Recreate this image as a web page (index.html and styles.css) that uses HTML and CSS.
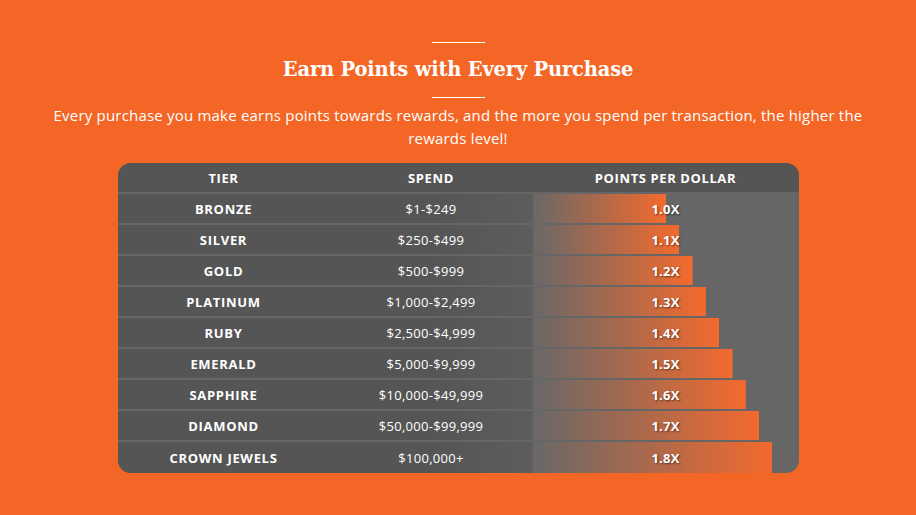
FILE: index.html
```html
<!DOCTYPE html>
<html lang="en">
<head>
<meta charset="utf-8">
<title>Earn Points with Every Purchase</title>
<link rel="stylesheet" href="styles.css">
</head>
<body>
<section class="rewards">
  <span class="rule"></span>
  <h1 class="title">Earn Points with Every Purchase</h1>
  <span class="rule"></span>
  <p class="intro">Every purchase you make earns points towards rewards, and the more you spend per transaction, the higher the rewards level!</p>
  <div class="table">
    <div class="row head">
      <div class="cell">TIER</div>
      <div class="cell">SPEND</div>
      <div class="cell">POINTS PER DOLLAR</div>
    </div>
    <div class="row"><div class="cell tier">BRONZE</div><div class="cell spend">$1-$249</div><div class="cell points" style="--w:50%">1.0X</div></div>
    <div class="row"><div class="cell tier">SILVER</div><div class="cell spend">$250-$499</div><div class="cell points" style="--w:55%">1.1X</div></div>
    <div class="row"><div class="cell tier">GOLD</div><div class="cell spend">$500-$999</div><div class="cell points" style="--w:60%">1.2X</div></div>
    <div class="row"><div class="cell tier">PLATINUM</div><div class="cell spend">$1,000-$2,499</div><div class="cell points" style="--w:65%">1.3X</div></div>
    <div class="row"><div class="cell tier">RUBY</div><div class="cell spend">$2,500-$4,999</div><div class="cell points" style="--w:70%">1.4X</div></div>
    <div class="row"><div class="cell tier">EMERALD</div><div class="cell spend">$5,000-$9,999</div><div class="cell points" style="--w:75%">1.5X</div></div>
    <div class="row"><div class="cell tier">SAPPHIRE</div><div class="cell spend">$10,000-$49,999</div><div class="cell points" style="--w:80%">1.6X</div></div>
    <div class="row"><div class="cell tier">DIAMOND</div><div class="cell spend">$50,000-$99,999</div><div class="cell points" style="--w:85%">1.7X</div></div>
    <div class="row"><div class="cell tier">CROWN JEWELS</div><div class="cell spend">$100,000+</div><div class="cell points" style="--w:90%">1.8X</div></div>
  </div>
</section>
</body>
</html>
```

FILE: styles.css
```css
html, body {
  margin: 0;
  padding: 0;
  background: #f36625;
  height: 100%;
}
body {
  font-family: "Open Sans", "Noto Sans", sans-serif;
  color: #fff;
}
.rewards {
  display: flex;
  flex-direction: column;
  align-items: center;
  padding-top: 42px;
}
.rule {
  display: block;
  width: 53px;
  height: 1px;
  background: #fff;
}
.title {
  margin: 0;
  height: 54px;
  line-height: 54px;
  font-family: "DejaVu Serif", serif;
  font-weight: 700;
  font-size: 19.5px;
  letter-spacing: -0.2px;
}
.intro {
  margin: 6px 0 0;
  width: 840px;
  text-align: center;
  font-size: 15px;
  line-height: 23px;
  font-weight: 500;
  letter-spacing: 0.2px;
}
.table {
  margin-top: 13px;
  width: 681px;
  border-radius: 13px;
  overflow: hidden;
  background: #666;
}
.row {
  display: grid;
  grid-template-columns: 212px 203px 1fr;
  height: 29px;
  margin-top: 2px;
  font-size: 13px;
  letter-spacing: 0.3px;
}
.row:last-child {
  height: 31px;
}
.row.head {
  height: 29px;
  margin-top: 0;
  background: #555;
  font-weight: 700;
  letter-spacing: 0.6px;
}
.cell {
  display: flex;
  align-items: center;
  justify-content: center;
}
.tier {
  background: #555;
  font-weight: 700;
  letter-spacing: 0.7px;
}
.spend {
  background: linear-gradient(90deg, #555 50%, #5d5d5d);
}
.points {
  font-weight: 700;
  letter-spacing: 0.2px;
  text-shadow: 1px 1px 2px rgba(0, 0, 0, 0.55);
  background: linear-gradient(90deg, #686868, #f36a2e) no-repeat;
  background-size: var(--w) 100%;
}
```
